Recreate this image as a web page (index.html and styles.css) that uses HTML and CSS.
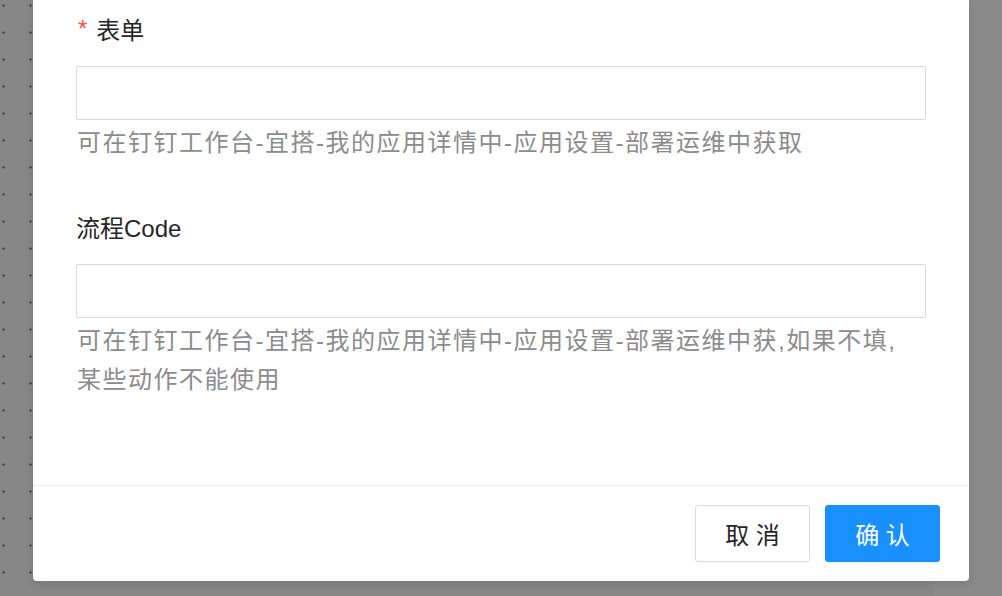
FILE: index.html
```html
<!DOCTYPE html>
<html lang="zh-CN">
<head>
<meta charset="utf-8">
<title>配置</title>
<link rel="stylesheet" href="styles.css">
</head>
<body>
<div class="canvas"></div>
<div class="side-panel"></div>
<div class="modal">
  <div class="modal-body">
    <div class="form-item">
      <label class="form-label"><span class="required">*</span>表单</label>
      <input class="form-input" type="text">
      <div class="form-hint">可在钉钉工作台-宜搭-我的应用详情中-应用设置-部署运维中获取</div>
    </div>
    <div class="form-item second">
      <label class="form-label">流程Code</label>
      <input class="form-input" type="text">
      <div class="form-hint">可在钉钉工作台-宜搭-我的应用详情中-应用设置-部署运维中获,如果不填,<br>某些动作不能使用</div>
    </div>
  </div>
  <div class="modal-footer">
    <button class="btn btn-default">取 消</button>
    <button class="btn btn-primary">确 认</button>
  </div>
</div>
</body>
</html>
```

FILE: styles.css
```css
html, body {
  margin: 0;
  padding: 0;
  width: 1002px;
  height: 596px;
  overflow: hidden;
}

body {
  position: relative;
  font-family: "Liberation Sans", "Noto Sans CJK SC", sans-serif;
  background: #878787;
}

.canvas {
  position: absolute;
  inset: 0;
  background-color: #878787;
  background-image: radial-gradient(circle, #3d3d3d 0.9px, transparent 1.3px);
  background-size: 27px 27px;
  background-position: -10px -8px;
}

.side-panel {
  position: absolute;
  left: 933px;
  top: 0;
  right: 0;
  bottom: 0;
  background: #8a8a8a;
}

.modal {
  position: absolute;
  left: 33px;
  top: 0;
  width: 936px;
  height: 581px;
  background: #fff;
  border-radius: 0 0 4px 4px;
  box-shadow: 0 3px 10px rgba(0, 0, 0, 0.12);
  display: flex;
  flex-direction: column;
}

.modal-body {
  flex: 1;
  padding: 11px 43px 0;
}

.form-item {
  display: flex;
  flex-direction: column;
}

.form-item.second {
  margin-top: 47px;
}

.form-label {
  font-size: 24px;
  line-height: 40px;
  height: 40px;
  color: #262626;
  margin-bottom: 15px;
  display: flex;
  align-items: center;
}

.required {
  color: #ff4d4f;
  font-size: 24px;
  margin-right: 9px;
  margin-left: 2px;
  position: relative;
  top: -2px;
}

.form-input {
  box-sizing: border-box;
  width: 850px;
  height: 54px;
  margin: 0;
  border: 1px solid #d9d9d9;
  border-radius: 2px;
  background: #fff;
  outline: none;
  font-size: 24px;
  padding: 0 18px;
}

.form-hint {
  margin-top: 3px;
  font-size: 24px;
  line-height: 39px;
  letter-spacing: 1.5px;
  color: #8c8c8c;
  padding-left: 1px;
}

.modal-footer {
  border-top: 1px solid #f0f0f0;
  padding: 19px 29px 19px;
  display: flex;
  justify-content: flex-end;
  gap: 15px;
}

.btn {
  box-sizing: border-box;
  width: 115px;
  height: 57px;
  border-radius: 3px;
  font-family: "Liberation Sans", "Noto Sans CJK SC", sans-serif;
  font-size: 24px;
  cursor: pointer;
  padding: 0;
}

.btn-default {
  background: #fff;
  border: 1px solid #d9d9d9;
  color: #262626;
  box-shadow: 0 2px 0 rgba(0, 0, 0, 0.015);
}

.btn-primary {
  background: #1890ff;
  border: 1px solid #1890ff;
  color: #fff;
  box-shadow: 0 2px 0 rgba(0, 0, 0, 0.045);
}
```
